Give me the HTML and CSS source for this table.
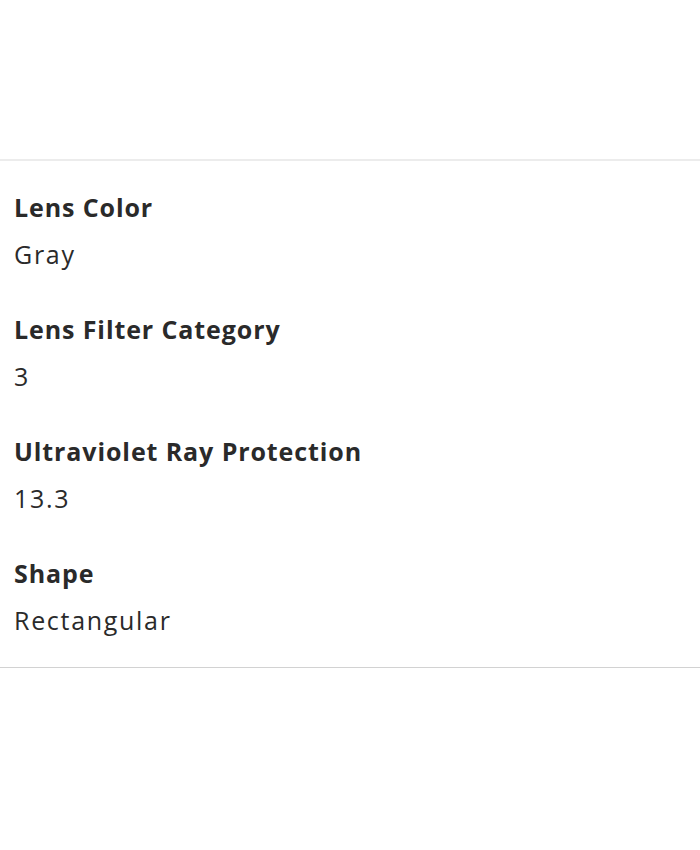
FILE: index.html
```html
<!DOCTYPE html>
<html lang="en">
<head>
<meta charset="utf-8">
<link rel="stylesheet" href="styles.css">
</head>
<body>
<div class="top-space"></div>
<section class="specs">
  <div class="spec">
    <div class="spec-label">Lens Color</div>
    <div class="spec-value">Gray</div>
  </div>
  <div class="spec">
    <div class="spec-label">Lens Filter Category</div>
    <div class="spec-value">3</div>
  </div>
  <div class="spec">
    <div class="spec-label">Ultraviolet Ray Protection</div>
    <div class="spec-value">13.3</div>
  </div>
  <div class="spec">
    <div class="spec-label">Shape</div>
    <div class="spec-value">Rectangular</div>
  </div>
</section>
</body>
</html>
```

FILE: styles.css
```css
html, body {
  margin: 0;
  padding: 0;
  background: #ffffff;
}
body {
  font-family: "Open Sans", "Noto Sans", sans-serif;
  color: #2a2a2a;
  width: 700px;
}
.top-space {
  height: 159px;
}
.specs {
  border-top: 2px solid #ececec;
  border-bottom: 1px solid #d2d2d2;
  padding: 30px 14px 31px;
  display: flex;
  flex-direction: column;
  gap: 43px;
}
.spec {
  display: flex;
  flex-direction: column;
  gap: 15px;
}
.spec-label {
  font-size: 25px;
  line-height: 32px;
  font-weight: 700;
  letter-spacing: 0.9px;
}
.spec-value {
  font-size: 25px;
  line-height: 32px;
  font-weight: 400;
  letter-spacing: 1.7px;
}
```
